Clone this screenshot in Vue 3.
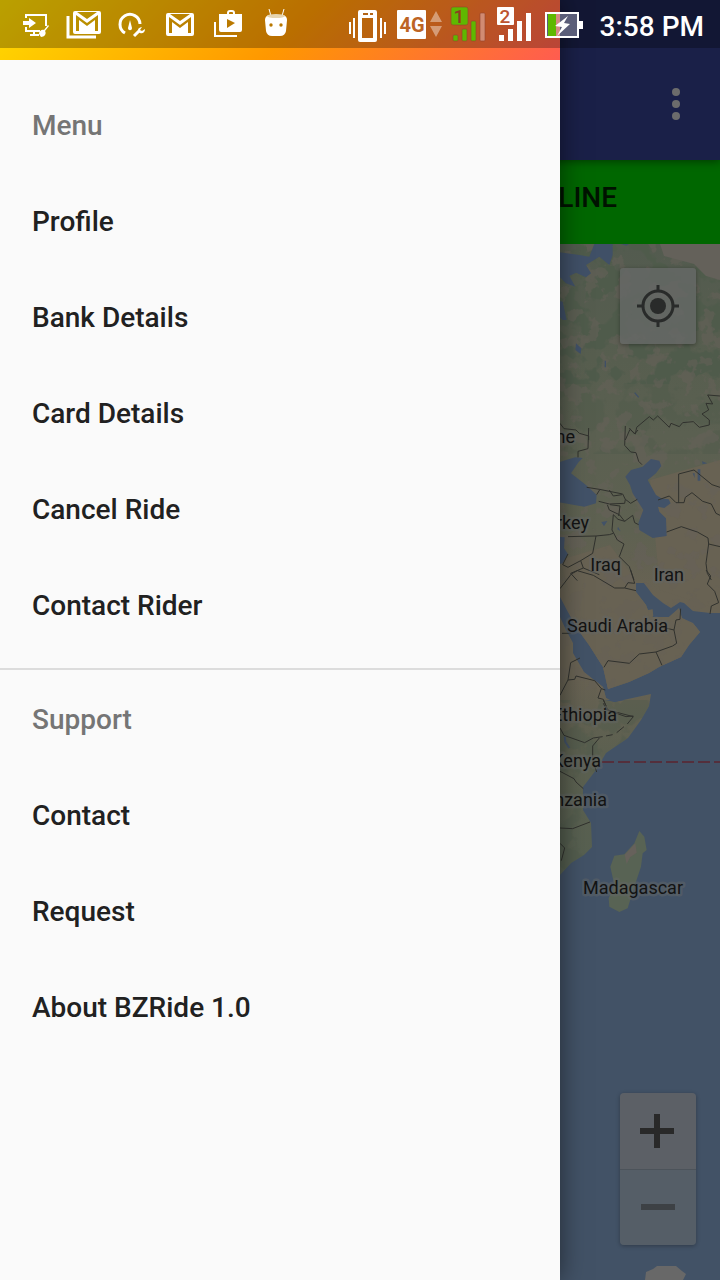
<script setup>
const menuItems = ['Profile', 'Bank Details', 'Card Details', 'Cancel Ride', 'Contact Rider']
const supportItems = ['Contact', 'Request', 'About BZRide 1.0']
const mapLabels = [
  { text: 'Ukraine', x: 575, y: 443 },
  { text: 'Turkey', x: 589, y: 529 },
  { text: 'Iraq', x: 621, y: 571 },
  { text: 'Iran', x: 684, y: 581 },
  { text: 'Saudi Arabia', x: 668, y: 632 },
  { text: 'Ethiopia', x: 617, y: 721 },
  { text: 'Kenya', x: 601, y: 767 },
  { text: 'Tanzania', x: 607, y: 806 },
  { text: 'Madagascar', x: 683, y: 894 },
]
</script>

<template>
  <div class="screen">
    <header class="status">
      <div class="notices">
        <svg width="48" height="48" viewBox="0 0 48 48">
          <path d="M14 18v-3h20v11M14 27v4h14M22 32v2M18 35h9" fill="none" stroke="#fff" stroke-width="2" />
          <path d="M11 21h6v-3l7 5-7 5v-3h-6z" fill="#fff" />
          <path d="M36 25l1 1-4 5c2 3-1 6-4 6l-2-3c0-3 3-5 5-4z" fill="#fff" />
        </svg>
        <svg width="48" height="48" viewBox="0 0 48 48">
          <path d="M8 16v21h28" fill="none" stroke="#fff" stroke-width="3" />
          <path fill-rule="evenodd" d="M15 11h24a2 2 0 0 1 2 2v19a2 2 0 0 1-2 2H15a2 2 0 0 1-2-2V13a2 2 0 0 1 2-2zM16 31V15l11 8 11-8v16h-3V20l-8 6-8-6v11zM17 12l10 7 10-7z" fill="#fff" />
        </svg>
        <svg width="48" height="48" viewBox="0 0 48 48">
          <path d="M17 33a10 10 0 1 1 15-9" fill="none" stroke="#fff" stroke-width="3" />
          <path d="M22 20l2 8c0 3-4 3-4 0z" fill="#fff" />
          <path d="M26 36l5-5" stroke="#fff" stroke-width="3" />
          <path d="M34 27l-2 3 2 1 3-2c0 4-3 5-5 4s-4-5 2-6z" fill="#fff" />
        </svg>
        <svg width="48" height="48" viewBox="0 0 48 48">
          <path fill-rule="evenodd" d="M12 13h24a2 2 0 0 1 2 2v19a2 2 0 0 1-2 2H12a2 2 0 0 1-2-2V15a2 2 0 0 1 2-2zM13 33V17l11 8 11-8v16h-3V22l-8 6-8-6v11zM14 14l10 7 10-7z" fill="#fff" />
        </svg>
        <svg width="48" height="48" viewBox="0 0 48 48">
          <path d="M11 22v14h22M24 15v-2q0-2 2-2h2q2 0 2 2v2" fill="none" stroke="#fff" stroke-width="2" />
          <path fill-rule="evenodd" d="M15 14h23v16q0 2-2 2H17q-2 0-2-2zM23 19v9l8-5z" fill="#fff" />
        </svg>
        <svg width="48" height="48" viewBox="0 0 48 48">
          <path d="M17 9l2 7M32 9l-2 7" stroke="#fff" stroke-width="1" />
          <path d="M13 20q0-4 4-5h14q4 1 4 5l-1 11q-1 5-6 5h-8q-5 0-6-5z" fill="#fff" />
          <ellipse cx="24" cy="16" rx="9" ry="2" fill="#e6d5b0" />
          <circle cx="19" cy="25" r="1.7" fill="#b97800" /><circle cx="29" cy="25" r="1.7" fill="#b97800" />
        </svg>
      </div>
      <div class="indicators">
        <svg width="40" height="48" viewBox="0 0 40 48">
          <path d="M2 22v12M6 18v20M33 18v20M37 22v12" stroke="#fff" stroke-width="2" />
          <path fill-rule="evenodd" d="M12 10h15q2 0 2 2v28q0 2-2 2H12q-2 0-2-2V12q0-2 2-2zM14 18v20h11V18z" fill="#fff" />
          <path d="M15 14h5M22 14h3" stroke="#b36416" stroke-width="2" />
        </svg>
        <svg width="46" height="48" viewBox="0 0 46 48">
          <rect x="1" y="10" width="29" height="29" rx="1" fill="#fff" />
          <text x="16" y="32" text-anchor="middle" font-size="20" font-weight="700" fill="#bd6424">4G</text>
          <path d="M34 22l6-11 6 11zM34 26h12l-6 11z" fill="#fff" opacity=".4" />
        </svg>
        <svg width="38" height="48" viewBox="0 0 38 48">
          <rect x="1" y="7" width="17" height="18" rx="2" fill="#5fb800" stroke="#96452d" stroke-width=".6" />
          <text x="9" y="23" text-anchor="middle" font-size="19" font-weight="500" fill="#8d3d20">1</text>
          <g stroke="#96452d" stroke-width=".6">
            <rect x="3" y="35" width="5" height="6" rx="1" fill="#5fb800" />
            <rect x="12" y="29" width="5" height="12" rx="1" fill="#5fb800" />
            <rect x="21" y="21" width="5" height="20" rx="1" fill="#5fb800" />
            <rect x="30" y="13" width="5" height="28" rx="1" fill="#d18b72" />
          </g>
        </svg>
        <svg width="38" height="48" viewBox="0 0 38 48">
          <rect x="1" y="7" width="17" height="18" rx="1" fill="#fff" />
          <text x="9" y="23" text-anchor="middle" font-size="19" font-weight="500" fill="#bd5430">2</text>
          <path d="M3 35h5v6H3zM12 29h5v12h-5zM21 21h5v20h-5zM30 13h5v28h-5z" fill="#fff" />
        </svg>
        <svg width="42" height="48" viewBox="0 0 42 48">
          <path d="M3 12h34v9h4v8h-4v9H3z" fill="#fff" />
          <path d="M5 14h30v22H5z" fill="#5b5e79" />
          <path d="M6 14h8v22H6z" fill="#5fb800" />
          <path d="M14 14h4v22h-4z" fill="#d58a83" />
          <path d="M26 16L13 26l7 1-5 9 13-12-6-1z" fill="#fff" />
        </svg>
        <time class="clock">3:58 PM</time>
      </div>
    </header>

    <main class="app">
      <div class="toolbar">
        <button class="more" aria-label="More options"><i></i><i></i><i></i></button>
      </div>
      <button class="online">ONLINE</button>
      <div class="map">
        <svg class="terrain" viewBox="0 244 720 1036" preserveAspectRatio="xMaxYMin slice" role="img" aria-label="Map">
          <defs>
            <linearGradient id="landTone" gradientUnits="userSpaceOnUse" x1="0" y1="244" x2="0" y2="880">
              <stop offset="0" stop-color="#535b4f" />
              <stop offset=".18" stop-color="#575e4f" />
              <stop offset=".3" stop-color="#5b6051" />
              <stop offset=".45" stop-color="#5e6151" />
              <stop offset=".55" stop-color="#686253" />
              <stop offset=".68" stop-color="#686253" />
              <stop offset=".8" stop-color="#5c6050" />
              <stop offset="1" stop-color="#566051" />
            </linearGradient>
            <clipPath id="landClip">
              <path d="M540 244H720V613H710L693 611 684 603 680 602 671 608 663 603 653 595 644 583H636V592L646 605 649 613 653 617H669L679 608 682 618 693 623 700 632 689 645 681 657 659 667 649 673 629 682 608 689 603 667 589 645 576 627 560 597 540 570z" />
              <path d="M540 590L560 617 566 630 573 643V653L584 672 603 687 606 698 614 702 651 694 649 706 641 720 628 738 606 753 596 770 583 787V810L591 823 592 847 584 855 571 863 560 875 540 890z" />
            </clipPath>
            <filter id="paleSpots" x="0" y="0" width="1" height="1" color-interpolation-filters="sRGB">
              <feTurbulence type="fractalNoise" baseFrequency=".06" numOctaves="4" seed="8" />
              <feColorMatrix values="0 0 0 0 .4  0 0 0 0 .38  0 0 0 0 .35  14 0 0 0 -7.8" />
            </filter>
            <filter id="greenSpots" x="0" y="0" width="1" height="1" color-interpolation-filters="sRGB">
              <feTurbulence type="fractalNoise" baseFrequency=".04" numOctaves="4" seed="21" />
              <feColorMatrix values="0 0 0 0 .31  0 0 0 0 .355  0 0 0 0 .295  0 14 0 0 -6.6" />
            </filter>
          </defs>
          <rect y="244" width="720" height="1036" fill="#425266" />
          <g clip-path="url(#landClip)">
            <rect x="540" y="244" width="180" height="660" fill="url(#landTone)" />
            <path d="M650 480L720 460V610L660 590zM560 560L610 545 650 600 720 640 660 690 600 700z" fill="#686253" />
            <rect x="540" y="244" width="180" height="140" filter="url(#greenSpots)" />
            <rect x="540" y="384" width="180" height="70" filter="url(#greenSpots)" opacity=".4" />
            <rect x="540" y="244" width="180" height="340" filter="url(#paleSpots)" opacity=".55" />
            <rect x="540" y="580" width="180" height="110" filter="url(#paleSpots)" opacity=".4" />
            <rect x="540" y="700" width="180" height="200" filter="url(#greenSpots)" opacity=".4" />
            <path d="M660 244h60v36l-14-4-12-12-30-8z" fill="#64615a" />
          </g>
          <g transform="translate(556 240) scale(.3333)">
            <path d="M0 35L70 45 100 50 115 12H170V45L160 75 130 50 90 75 105 100 90 112 60 98 40 108 58 140 30 130 0 100zM0 180L20 185 32 240 20 240 0 220zM60 310L76 325 74 342 58 330zM195 12h24l-8 5z" fill="#405067" />
            <path d="M148 362v20M236 458l12 14" fill="none" stroke="#405067" stroke-width="4" />
            <path class="border" d="M208 600L222 568 238 582 242 562 280 530 292 540 305 528 340 562 345 550 370 560 380 548 412 545 430 562 460 555V540L438 522 458 510 450 490 470 492 455 465 492 468M12 550L24 566 60 570 70 580 98 588V600" />
          </g>
          <g transform="translate(556 430) scale(.3333)">
            <path d="M0 100L30 90 58 82 80 84 68 96 45 130 90 165 122 195 120 220 85 230 0 215zM0 320L26 322 24 355 36 372 20 400 0 405zM285 87L310 92 316 108 300 130 275 150 300 195 316 205 338 208 344 220 325 234 306 230 310 245 330 265 332 318 290 324 250 300 247 280 262 240 230 190 222 165 208 140 225 120 260 110zM136 276l18-3-10 16zM425 118h8v34h-8zM410 130h6v14zM438 94l16 6-14 3zM186 290l8 14-10-6z" fill="#425268" />
            <path class="border" d="M98 -6L96 56 66 64V82M208 -12L206 46 224 66 240 68 248 94 258 104M220 -6l16 18 10-12M92 172L130 178 200 192 208 208 224 220 244 208M122 194l10-16M128 214L160 222 206 220 208 208M160 180l12 18 26-4M154 224L160 240 190 254 206 274 186 268 172 254 168 300 184 330 204 342 190 380 206 396 220 410 234 450M162 224l30 4-4 30M206 274l24-18 6 22 12 6M306 210L340 198 360 218H384L388 202 408 188 440 214 466 222 480 250 492 256M368 218V132L414 120 468 164 492 172M332 306L376 290 424 306 456 324 458 342 492 350M458 342L450 400 454 430 466 450M36 320L120 318 160 314 172 310M120 318L110 370 74 392 36 412 20 404 36 372M74 392l8 22-38 16 20 22M82 414l48 20" />
          </g>
          <g transform="translate(556 570) scale(.3333)">
            <path class="border" d="M12 56L46 12 64 2 112 16 176 54 206 54 240 62M206 54l10-16 20 2-12-40M450 0l14 18-10 24 22 22 12 34-22 10-4 24M294 150L320 172 354 180 362 220 350 228 300 246 250 252 220 280 156 272 144 292M300 246l18 40M354 180l6-30 12-2 2-32M18 190H44M12 376L36 330 44 278 72 264M36 330l20-2 4-10 56 14 20 24 12 4M136 356l-10 28 16 4 8 20M142 400L152 420 210 440 232 438" />
            <path d="M276 120l14-2 2 20-14 6z" fill="#686253" />
          </g>
          <g transform="translate(556 700) scale(.3333)">
            <path class="border" d="M142 0L156 30 232 50 214 72M204 80l-22 18M170 104l-20 4M140 110l-28 4-26 14L24 106 12 84M130 114L110 138V180L122 216M12 214L54 236 60 246 82 266M12 384L50 386 102 366M12 430l14 14-10 38" />
            <path d="M26 110l2 16 12 18" fill="none" stroke="#425268" stroke-width="6" />
            <path d="M148 0h58l-30 6z" fill="#425268" />
            <path d="M250 393L265 410 272 450 260 460 255 500 235 560 215 625 190 636 160 620 158 595 175 555 163 500 175 467 205 463 235 430z" fill="#586354" />
            <path d="M238 430l4 28-20 14-10 20-6-28z" fill="#66615b" />
          </g>
          <path d="M602 762H720" stroke="#542f3c" stroke-width="2" stroke-dasharray="12 4" />
          <path d="M646 1272L653 1269 657 1266H676L682 1271 686 1274 683 1280H645z" fill="#686868" />
          <g class="labels">
            <text v-for="label in mapLabels" :key="label.text" :x="label.x" :y="label.y">{{ label.text }}</text>
          </g>
        </svg>
        <div class="controls">
          <button class="control locate" aria-label="My location">
            <svg width="44" height="44" viewBox="0 0 44 44">
              <circle cx="22" cy="22" r="15" fill="none" stroke="#292b2a" stroke-width="3" />
              <circle cx="22" cy="22" r="8" fill="#292b2a" />
              <path d="M22 1v6M22 37v6M1 22h6M37 22h6" stroke="#292b2a" stroke-width="3" />
            </svg>
          </button>
          <div class="zoom">
            <button class="control" aria-label="Zoom in">
              <svg width="36" height="34" viewBox="0 0 36 34"><path d="M17 0v34M0 17h34" stroke="#292929" stroke-width="6" /></svg>
            </button>
            <button class="control out" aria-label="Zoom out">
              <svg width="34" height="34" viewBox="0 0 34 34"><path d="M0 16h34" stroke="#3d4145" stroke-width="6" /></svg>
            </button>
          </div>
        </div>
      </div>
    </main>

    <nav class="drawer">
      <div class="banner"></div>
      <h2>Menu</h2>
      <a v-for="item in menuItems" :key="item" href="#">{{ item }}</a>
      <hr />
      <h2>Support</h2>
      <a v-for="item in supportItems" :key="item" href="#">{{ item }}</a>
    </nav>
  </div>
</template>

<style>
body {
  margin: 0;
}
</style>

<style scoped>
.screen {
  display: grid;
  grid-template-columns: minmax(0, 1fr);
  min-height: 100vh;
  overflow: hidden;
  font-family: Roboto, "Noto Sans", sans-serif;
  font-size: 28px;
  font-weight: 500;
}
.screen > * {
  grid-area: 1 / 1;
}
button {
  margin: 0;
  padding: 0;
  border: 0;
  font: inherit;
}
svg {
  display: block;
}
.status {
  z-index: 3;
  align-self: start;
  display: flex;
  justify-content: space-between;
  height: 48px;
  padding: 0 16px 0 12px;
  background: rgba(0, 0, 0, 0.27);
}
.notices {
  display: flex;
}
.indicators {
  display: flex;
  gap: 8px;
}
.clock {
  margin-left: 8px;
  line-height: 54px;
  color: #fff;
}
.app {
  display: flex;
  flex-direction: column;
  background: #425266;
}
.toolbar {
  z-index: 1;
  display: flex;
  justify-content: flex-end;
  height: 112px;
  padding: 48px 20px 0;
  background: #1a2048;
  box-shadow: 0 2px 8px rgba(0, 0, 0, 0.4);
}
.more {
  display: flex;
  flex-direction: column;
  align-items: center;
  justify-content: center;
  gap: 4px;
  width: 48px;
  background: none;
}
.more i {
  width: 8px;
  height: 8px;
  border-radius: 50%;
  background: #6c6c6c;
}
.online {
  height: 84px;
  padding: 0 103px 10px 0;
  background: #006700;
  color: #001200;
  text-align: right;
}
.map {
  flex: 1;
  display: grid;
}
.map > * {
  grid-area: 1 / 1;
}
.terrain {
  width: 100%;
  height: 100%;
}
.border {
  fill: none;
  stroke: #30312d;
  stroke-width: 3;
}
.labels {
  font-size: 18px;
  font-weight: 400;
  fill: #131313;
  stroke: rgba(100, 103, 103, 0.45);
  stroke-width: 5px;
  stroke-linejoin: round;
  paint-order: stroke;
  text-anchor: end;
}
.controls {
  display: flex;
  flex-direction: column;
  justify-content: space-between;
  justify-self: end;
  padding: 24px 24px 35px;
}
.control {
  display: flex;
  align-items: center;
  justify-content: center;
  width: 76px;
  height: 76px;
  background: #5c6066;
}
.locate {
  border-radius: 3px;
  background: rgba(103, 106, 104, 0.75);
  box-shadow: 0 1px 4px rgba(0, 0, 0, 0.35);
}
.zoom {
  border-radius: 4px;
  overflow: hidden;
  box-shadow: 0 1px 4px rgba(0, 0, 0, 0.3);
}
.out {
  box-sizing: border-box;
  border-top: 1px solid #4c535a;
  background: #555e67;
}
.drawer {
  z-index: 2;
  display: flex;
  flex-direction: column;
  width: calc(100% - 160px);
  background: #fafafa;
  box-shadow: 0 0 24px rgba(0, 0, 0, 0.5);
}
.banner {
  height: 60px;
  margin-bottom: 18px;
  background: linear-gradient(135deg, #ffdc00, #ff9800 52%, #ff5c50);
}
.drawer h2,
.drawer a {
  margin: 0;
  padding: 0 32px;
  font-size: 28px;
  font-weight: 500;
  line-height: 96px;
}
.drawer h2 {
  color: #757575;
}
.drawer a {
  color: #212121;
  text-decoration: none;
}
.drawer hr {
  width: 100%;
  height: 2px;
  margin: 14px 0 2px;
  border: 0;
  background: #dcdcdc;
}
</style>
